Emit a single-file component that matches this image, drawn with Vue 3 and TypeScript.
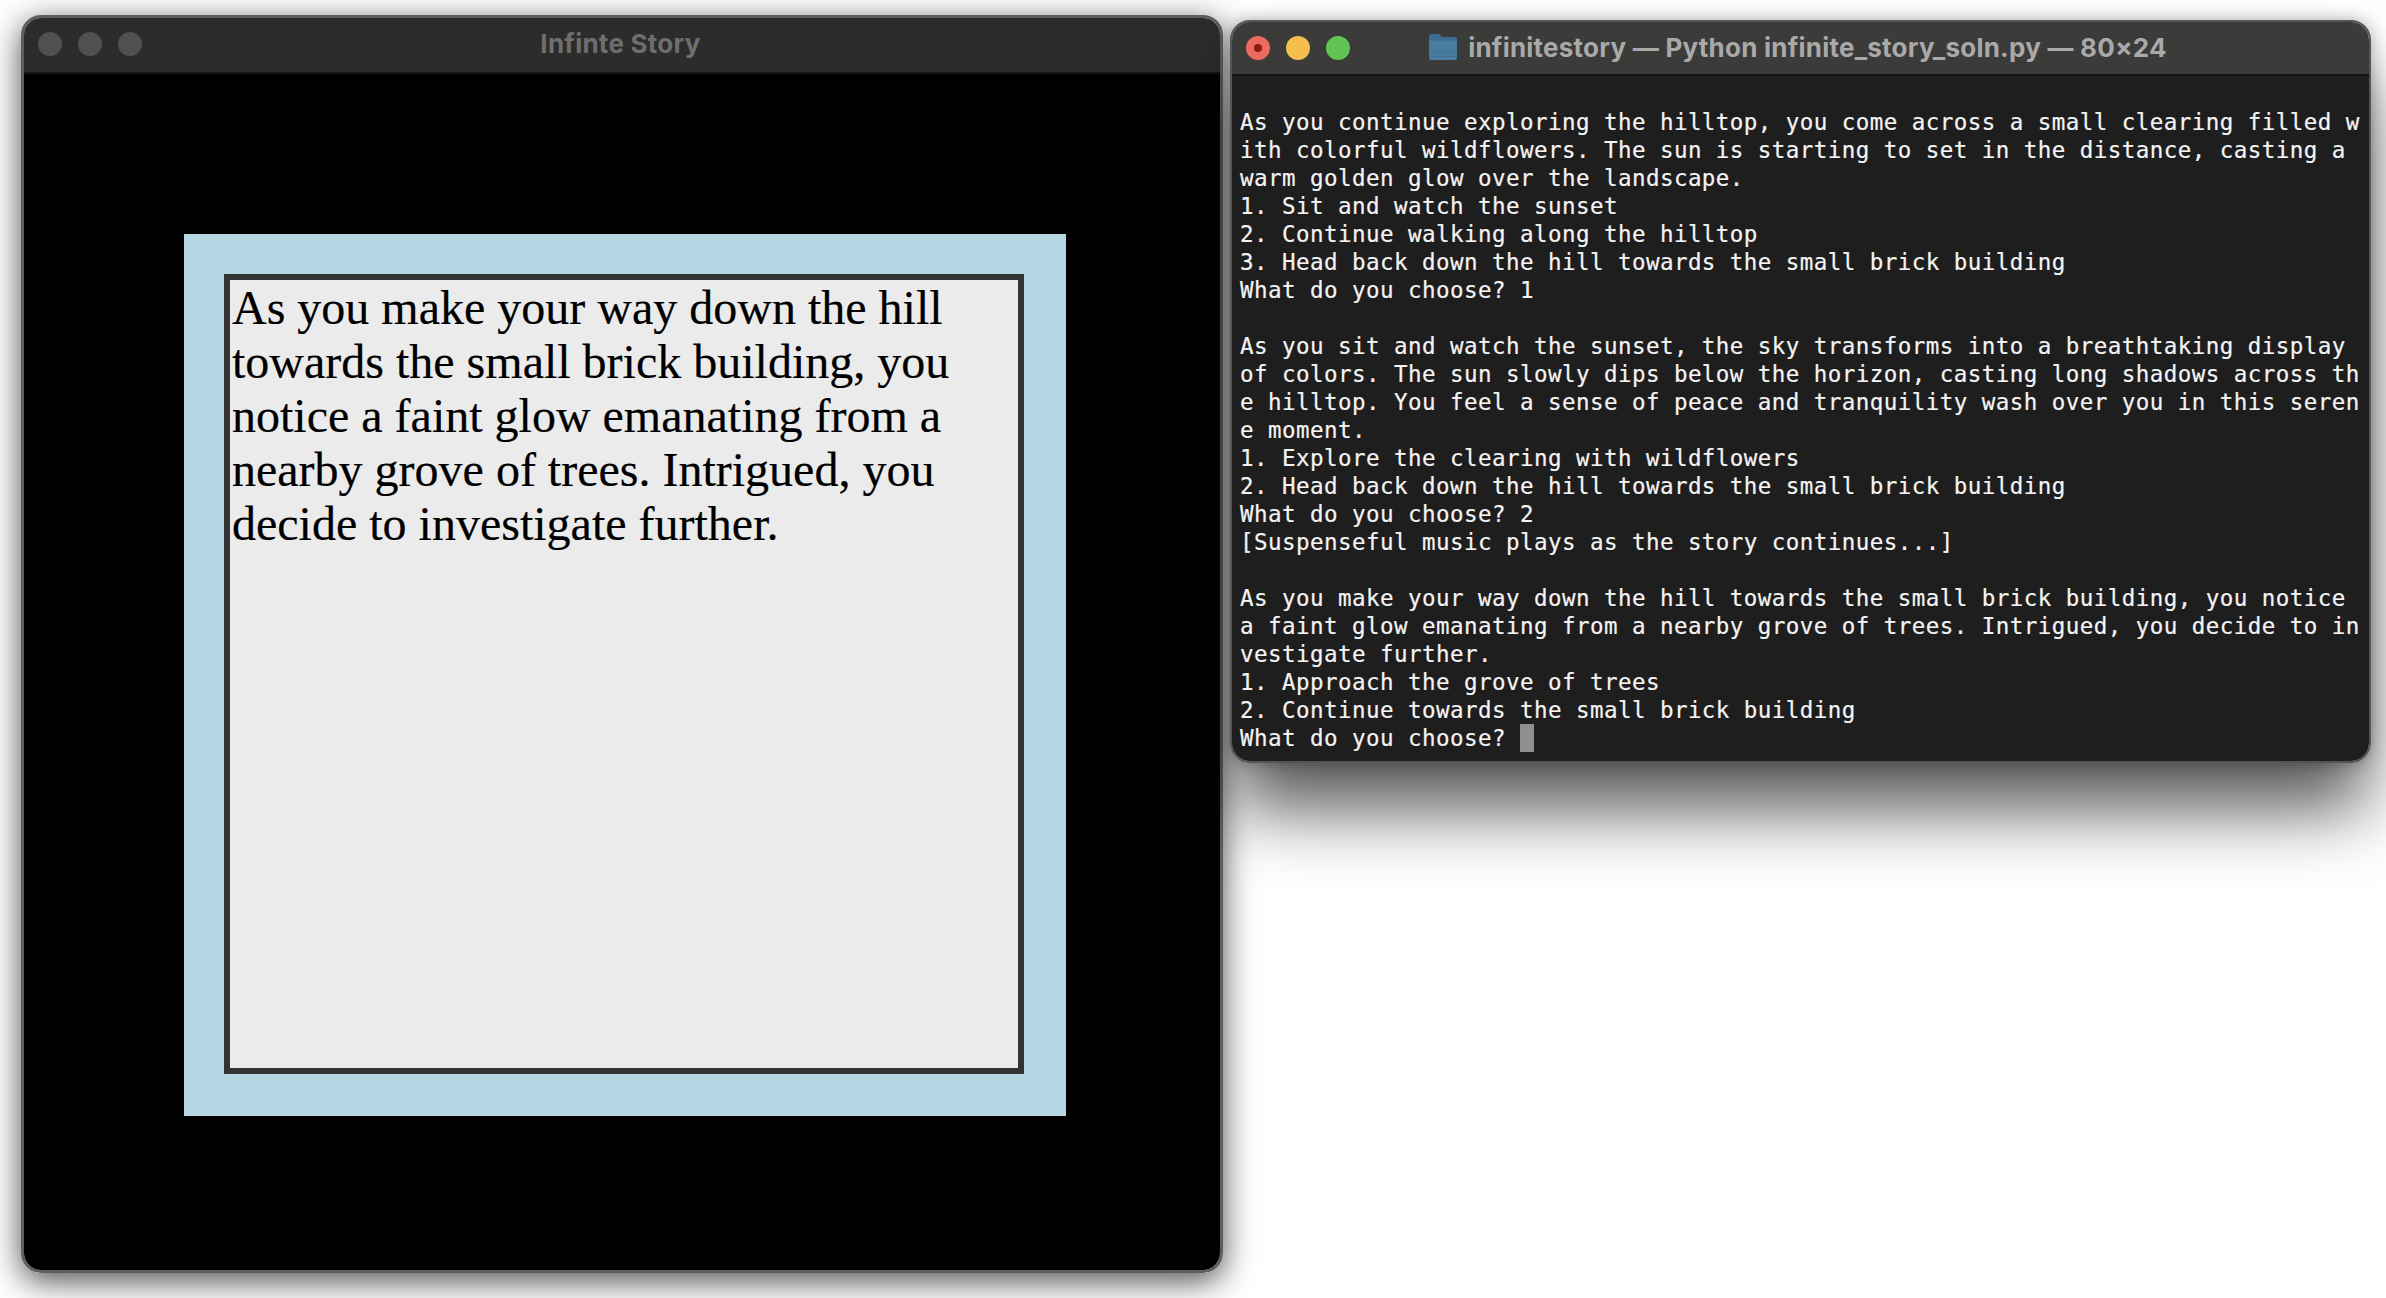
<script setup lang="ts">
const lines: string[] = [
  '',
  'As you continue exploring the hilltop, you come across a small clearing filled w',
  'ith colorful wildflowers. The sun is starting to set in the distance, casting a',
  'warm golden glow over the landscape.',
  '1. Sit and watch the sunset',
  '2. Continue walking along the hilltop',
  '3. Head back down the hill towards the small brick building',
  'What do you choose? 1',
  '',
  'As you sit and watch the sunset, the sky transforms into a breathtaking display',
  'of colors. The sun slowly dips below the horizon, casting long shadows across th',
  'e hilltop. You feel a sense of peace and tranquility wash over you in this seren',
  'e moment.',
  '1. Explore the clearing with wildflowers',
  '2. Head back down the hill towards the small brick building',
  'What do you choose? 2',
  '[Suspenseful music plays as the story continues...]',
  '',
  'As you make your way down the hill towards the small brick building, you notice',
  'a faint glow emanating from a nearby grove of trees. Intrigued, you decide to in',
  'vestigate further.',
  '1. Approach the grove of trees',
  '2. Continue towards the small brick building',
]
</script>

<template>
  <div class="desktop">
    <section class="window game">
      <header class="bar game-bar">
        <div class="lights">
          <span class="dot off"></span>
          <span class="dot off"></span>
          <span class="dot off"></span>
        </div>
        <div class="game-title">Infinte Story</div>
      </header>
      <div class="stage">
        <div class="sky">
          <div class="story">As you make your way down the hill towards the small brick building, you notice a faint glow emanating from a nearby grove of trees. Intrigued, you decide to investigate further.</div>
        </div>
      </div>
    </section>

    <section class="window term">
      <header class="bar term-bar">
        <div class="lights">
          <span class="dot red"><i></i></span>
          <span class="dot yellow"></span>
          <span class="dot green"></span>
        </div>
        <div class="term-title">
          <svg class="folder" width="28" height="26" viewBox="0 0 28 26">
            <path d="M0 2.5C0 1 1 0 2.4 0h6.4c1 0 1.6.3 2.2.9L13 3h12.6C27 3 28 4 28 5.4V23.6c0 1.4-1 2.4-2.4 2.4H2.4C1 26 0 25 0 23.6Z" fill="#3d6c92"/>
            <path d="M0 6.5h28v17.1c0 1.4-1 2.4-2.4 2.4H2.4C1 26 0 25 0 23.6Z" fill="#4a7ba1"/>
            <path d="M0 18.5h28M0 22.5h28" stroke="#42708f" stroke-width="1"/>
          </svg>
          <span>infinitestory — Python infinite_story_soln.py — 80×24</span>
        </div>
      </header>
      <div class="screen">
        <div v-for="(line, i) in lines" :key="i" class="line">{{ line }}</div>
        <div class="line">What do you choose? <span class="cursor"></span></div>
      </div>
    </section>
  </div>
</template>

<style>
html, body { margin: 0; background: #fff; }
</style>

<style scoped>
.desktop {
  position: relative;
  width: 2386px;
  height: 1298px;
  overflow: hidden;
  background: #fff;
}
.window {
  position: absolute;
  box-sizing: border-box;
  display: flex;
  flex-direction: column;
  overflow: hidden;
  border-style: solid;
  border-radius: 20px;
}
.game {
  left: 21px;
  top: 15px;
  width: 1202px;
  height: 1258px;
  border-width: 3px;
  border-color: #5e5e5e;
  box-shadow: 0 8px 32px rgba(0, 0, 0, 0.7);
}
.term {
  left: 1230px;
  top: 20px;
  width: 1141px;
  height: 743px;
  border-width: 2px;
  border-color: #555;
  box-shadow: 0 50px 70px -4px rgba(0, 0, 0, 0.66), 0 0 16px rgba(0, 0, 0, 0.3);
}
.bar {
  position: relative;
  flex: none;
  display: flex;
  align-items: center;
  box-sizing: border-box;
  font-family: "Inter", "Liberation Sans", sans-serif;
  font-weight: 700;
}
.game-bar {
  height: 56px;
  background: #2c2c2b;
  border-bottom: 2px solid #151515;
  padding: 0 0 2px 14px;
}
.term-bar {
  height: 54px;
  background: #3b3b3a;
  border-bottom: 2px solid #151515;
  padding-left: 14px;
}
.lights {
  display: flex;
  gap: 16px;
}
.dot {
  width: 24px;
  height: 24px;
  border-radius: 50%;
  display: flex;
  align-items: center;
  justify-content: center;
}
.off { background: #505050; }
.red { background: #ec6a5e; }
.red i { width: 8px; height: 8px; border-radius: 50%; background: #8c1a10; }
.yellow { background: #f4bf4f; }
.green { background: #61c554; }
.game-title {
  position: absolute;
  inset: 0 3px 4px 0;
  display: flex;
  align-items: center;
  justify-content: center;
  color: #6e6e6e;
  font-size: 26px;
  letter-spacing: 0.25px;
}
.term-title {
  position: absolute;
  inset: 0 5px 2px 0;
  display: flex;
  align-items: center;
  justify-content: center;
  gap: 11px;
  color: #a9a9a9;
  font-size: 26px;
  letter-spacing: 0.23px;
}
.stage {
  flex: 1;
  background: #000;
  padding: 160px;
}
.sky {
  box-sizing: border-box;
  width: 882px;
  height: 882px;
  background: #b5d6e3;
  padding: 40px;
}
.story {
  box-sizing: border-box;
  width: 800px;
  height: 800px;
  background: #ebebeb;
  border: 6px solid #333;
  padding: 1px 2px 0;
  font-family: "Liberation Serif", serif;
  font-size: 48px;
  line-height: 54px;
  color: #000;
  -webkit-text-stroke: 0.2px #000;
}
.screen {
  flex: 1;
  background: #1e1e1e;
  padding: 4px 8px 0;
  color: #f4f4f4;
  font-family: "DejaVu Sans Mono", monospace;
  font-size: 22.5px;
  letter-spacing: 0.45px;
  line-height: 28px;
  white-space: pre;
  -webkit-text-stroke: 0.2px #f4f4f4;
}
.line {
  height: 28px;
}
.cursor {
  display: inline-block;
  width: 14px;
  height: 28px;
  background: #8f8f8f;
  vertical-align: top;
}
</style>
